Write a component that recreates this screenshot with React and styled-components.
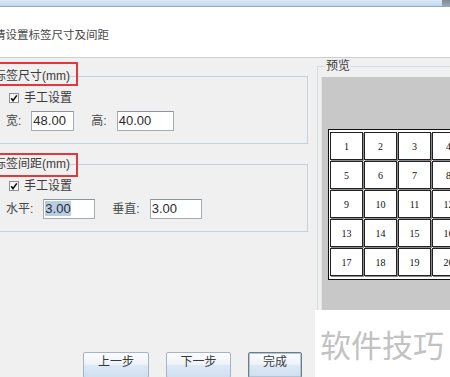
import React from "react";
import styled, { createGlobalStyle, css } from "styled-components";

const Global = createGlobalStyle`
  html, body { margin: 0; padding: 0; background: #f0f0f0; overflow: hidden; }
  body { width: 450px; height: 377px; }
`;

const FONT = `"Liberation Sans", "Noto Sans CJK SC", sans-serif`;

const Window = styled.div`
  position: relative;
  width: 460px;
  height: 377px;
  margin-left: -10px;
  overflow: hidden;
  background: #f0f0f0;
  font-family: ${FONT};
  color: #3a3a3a;
`;

const TitleBar = styled.div`
  display: flex;
  height: 6px;
  background: linear-gradient(#dce9f6, #c2d7ec);
  border-bottom: 1px solid #93a8be;
`;

const FrameCorner = styled.div`
  margin-left: auto;
  width: 8px;
  background: linear-gradient(#7d8a96, #9aa6b2);
`;

const Header = styled.div`
  height: 51px;
  box-sizing: border-box;
  padding: 21px 0 0 4px;
  background: #fff;
  border-bottom: 1px solid #cfcfcf;
`;

const HeaderText = styled.div`
  font-size: 11.5px;
  line-height: 14px;
  color: #484848;
`;

const Body = styled.div`
  padding-top: 1px;
`;

const Columns = styled.div`
  display: flex;
  align-items: flex-start;
  gap: 9px;
`;

const LeftCol = styled.div`
  flex: none;
  width: 318px;
  margin-top: 10px;
  display: flex;
  flex-direction: column;
`;

const Group = styled.fieldset`
  margin: ${(p) => (p.$mt ? `${p.$mt}px` : 0)} 0 0 0;
  padding: 0;
  min-width: 0;
  border: 1px solid #c5d2de;
`;

const Legend = styled.legend`
  position: relative;
  margin-left: 3px;
  padding: 0;
  font-size: 12px;
  line-height: 14px;
  color: #3a3a3a;
  &::after {
    content: "";
    position: absolute;
    left: -12px;
    right: -8px;
    top: ${(p) => p.$top}px;
    bottom: ${(p) => p.$bottom}px;
    border: 2px solid #e0383c;
  }
`;

const GroupContent = styled.div`
  padding: 7px 0 12px 15px;
`;

const CheckRow = styled.div`
  display: flex;
  align-items: center;
  gap: 5px;
  height: 16px;
  margin-left: 3px;
  font-size: 12px;
  line-height: 16px;
`;

const Box = styled.span`
  display: inline-flex;
  width: 10px;
  height: 10px;
  box-sizing: border-box;
  border: 1px solid #8e8e8e;
  background: linear-gradient(#f2f2f2, #ffffff);
`;

const FieldRow = styled.div`
  display: flex;
  align-items: center;
  gap: 17px;
  margin-top: 5px;
  height: 20px;
`;

const Field = styled.div`
  display: flex;
  align-items: center;
  gap: 10px;
`;

const Label = styled.span`
  font-size: 12px;
  line-height: 16px;
  color: #484848;
`;

const TextField = styled.div`
  width: ${(p) => p.$w}px;
  height: 20px;
  box-sizing: border-box;
  padding-left: 1px;
  background: #fff;
  border: 1px solid #a3abb3;
  border-top-color: #8d949b;
  font-size: 13px;
  line-height: 18px;
  color: #2a2a2a;
  white-space: nowrap;
`;

const Selected = styled.span`
  background: #b7cde6;
`;

const PreviewCol = styled.fieldset`
  flex: none;
  width: 150px;
  margin: 0;
  padding: 0 0 0 3px;
  min-width: 0;
  border: 1px solid #d3dbe3;
  border-bottom: none;
`;

const PreviewLegend = styled.legend`
  margin-left: 4px;
  padding: 0 1px;
  font-size: 12px;
  line-height: 14px;
  color: #3a3a3a;
`;

const GrayArea = styled.div`
  margin-top: 4px;
  height: 268px;
  box-sizing: border-box;
  padding: 52px 0 0 6px;
  background: #c8c8c8;
  border-left: 1px solid #e4e4e4;
`;

const LabelGrid = styled.div`
  display: inline-grid;
  grid-template-columns: repeat(4, 33px);
  grid-auto-rows: 28px;
  gap: 1px;
  padding: 2px 1px 3px 1px;
  background: #fff;
  border: 1px solid #111;
`;

const Cell = styled.div`
  display: flex;
  align-items: center;
  justify-content: center;
  box-sizing: border-box;
  border: 1px solid #222;
  box-shadow: 1px 1px 0 #8a8a8a;
  background: #fff;
  font-family: "Liberation Serif", serif;
  font-size: 10px;
  color: #111;
`;

const ButtonBar = styled.div`
  display: flex;
  gap: 17px;
  margin-top: 7px;
  padding-left: 93px;
`;

const Button = styled.div`
  width: ${(p) => p.$w}px;
  height: 26px;
  box-sizing: border-box;
  padding-top: 2px;
  text-align: center;
  font-size: 12px;
  line-height: 14px;
  color: #3a3a3a;
  border: 1px solid #a2b4c7;
  border-radius: 2px;
  background: linear-gradient(#fcfdff, #eef4fa 45%, #dbe7f3 55%, #d0e0f0);
  ${(p) =>
    p.$default &&
    css`
      border-color: #6e7d8e;
      box-shadow: inset 0 0 0 1px #b3c6d9;
    `}
`;

const Watermark = styled.div`
  position: absolute;
  left: 325px;
  top: 310px;
  width: 140px;
  height: 67px;
  padding-left: 5px;
  box-sizing: border-box;
  background: #fff;
  font-family: "Noto Sans CJK SC", sans-serif;
  font-size: 31px;
  line-height: 67px;
  color: #c2c2c2;
  white-space: nowrap;
`;

function CheckBox() {
  return (
    <Box>
      <svg width="8" height="8" viewBox="0 0 8 8">
        <path d="M1.2 4.2 L3 6.6 L6.8 1.4" fill="none" stroke="#111" strokeWidth="1.6" />
      </svg>
    </Box>
  );
}

export default function App() {
  const nums = Array.from({ length: 20 }, (_, i) => i + 1);
  return (
    <>
      <Global />
      <Window>
        <TitleBar>
          <FrameCorner />
        </TitleBar>
        <Header>
          <HeaderText>请设置标签尺寸及间距</HeaderText>
        </Header>
        <Body>
          <Columns>
            <LeftCol>
              <Group>
                <Legend $top={-7} $bottom={-3}>标签尺寸(mm)</Legend>
                <GroupContent>
                  <CheckRow>
                    <CheckBox />
                    <span>手工设置</span>
                  </CheckRow>
                  <FieldRow>
                    <Field>
                      <Label>宽:</Label>
                      <TextField $w={43}>48.00</TextField>
                    </Field>
                    <Field>
                      <Label>高:</Label>
                      <TextField $w={57}>40.00</TextField>
                    </Field>
                  </FieldRow>
                </GroupContent>
              </Group>
              <Group $mt={13}>
                <Legend $top={-4} $bottom={-6}>标签间距(mm)</Legend>
                <GroupContent>
                  <CheckRow>
                    <CheckBox />
                    <span>手工设置</span>
                  </CheckRow>
                  <FieldRow>
                    <Field>
                      <Label>水平:</Label>
                      <TextField $w={52}>
                        <Selected>3.00</Selected>
                      </TextField>
                    </Field>
                    <Field>
                      <Label>垂直:</Label>
                      <TextField $w={52}>3.00</TextField>
                    </Field>
                  </FieldRow>
                </GroupContent>
              </Group>
            </LeftCol>
            <PreviewCol>
              <PreviewLegend>预览</PreviewLegend>
              <GrayArea>
                <LabelGrid>
                  {nums.map((n) => (
                    <Cell key={n}>{n}</Cell>
                  ))}
                </LabelGrid>
              </GrayArea>
            </PreviewCol>
          </Columns>
          <ButtonBar>
            <Button $w={66}>上一步</Button>
            <Button $w={65}>下一步</Button>
            <Button $w={54} $default>完成</Button>
          </ButtonBar>
        </Body>
        <Watermark>软件技巧</Watermark>
      </Window>
    </>
  );
}
